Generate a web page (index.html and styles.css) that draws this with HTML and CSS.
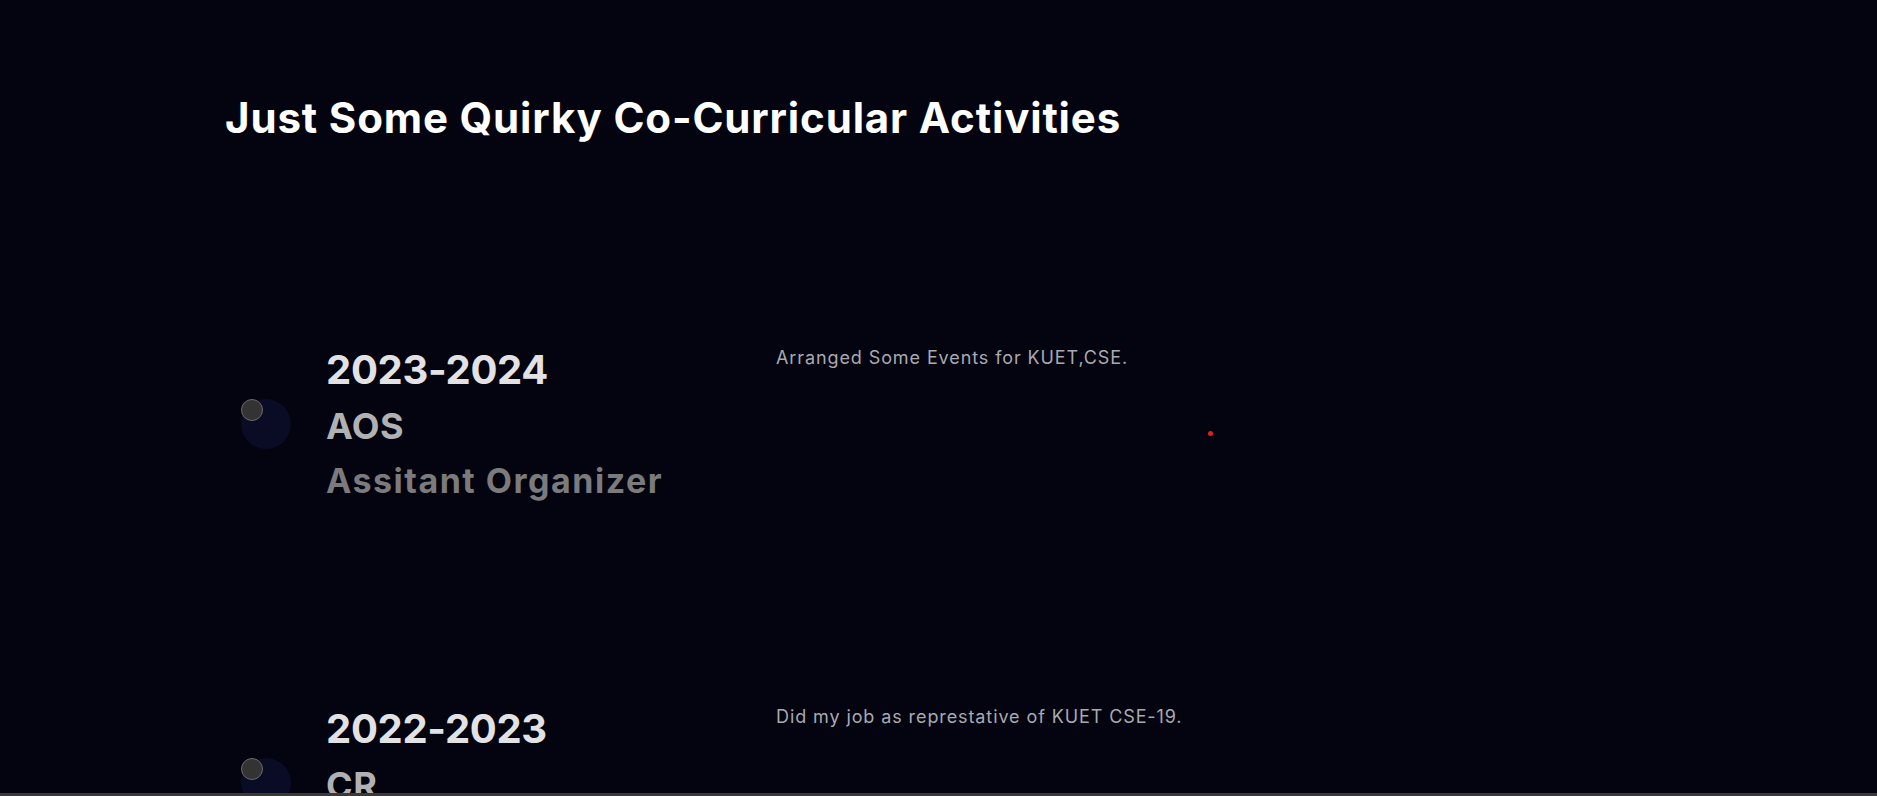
FILE: index.html
```html
<!DOCTYPE html>
<html lang="en">
<head>
<meta charset="utf-8">
<title>Co-Curricular Activities</title>
<link rel="stylesheet" href="styles.css">
</head>
<body>
<main class="page">
  <section class="section">
    <h1 class="title">Just Some Quirky Co-Curricular Activities</h1>
    <div class="timeline">
      <div class="item">
        <div class="left">
          <div class="marker"><span class="dot"></span></div>
          <div class="info">
            <div class="year">2023-2024</div>
            <div class="org">AOS</div>
            <div class="role">Assitant Organizer</div>
          </div>
        </div>
        <p class="desc">Arranged Some Events for KUET,CSE.</p>
      </div>
      <div class="item">
        <div class="left">
          <div class="marker"><span class="dot"></span></div>
          <div class="info">
            <div class="year">2022-2023</div>
            <div class="org">CR</div>
            <div class="role">Class Representative</div>
          </div>
        </div>
        <p class="desc">Did my job as represtative of KUET CSE-19.</p>
      </div>
    </div>
  </section>
  <span class="cursor"></span>
  <div class="bottom-bar"></div>
</main>
</body>
</html>
```

FILE: styles.css
```css
html, body {
  margin: 0;
  padding: 0;
  height: 100%;
  overflow: hidden;
}
body {
  background: #03040f;
  font-family: Inter, "Liberation Sans", sans-serif;
  color: #fff;
}
.page {
  position: relative;
  height: 796px;
  overflow: hidden;
}
.section {
  padding: 93px 0 0 225px;
}
.title {
  margin: 0;
  font-size: 42px;
  font-weight: 700;
  line-height: 50px;
  letter-spacing: 0.85px;
  color: #ffffff;
}
.timeline {
  padding-top: 202px;
  display: flex;
  flex-direction: column;
  gap: 196px;
}
.item {
  display: flex;
  align-items: flex-start;
}
.left {
  display: flex;
  align-items: flex-start;
  width: 551px;
}
.marker {
  position: relative;
  width: 50px;
  height: 50px;
  border-radius: 50%;
  background: #0a0b24;
  margin: 54px 35px 0 16px;
  flex: none;
}
.dot {
  position: absolute;
  left: 0;
  top: 0;
  width: 20px;
  height: 20px;
  border-radius: 50%;
  background: #333333;
  border: 1px solid #6a6a6a;
}
.info {
  display: flex;
  flex-direction: column;
}
.year {
  font-size: 40px;
  font-weight: 700;
  line-height: 50px;
  color: #e2e2e4;
  letter-spacing: -0.3px;
}
.org {
  margin-top: 4px;
  font-size: 36px;
  font-weight: 700;
  line-height: 54px;
  letter-spacing: 0.5px;
  color: #b1b1b4;
}
.role {
  margin-top: 1px;
  font-size: 34px;
  font-weight: 700;
  line-height: 54px;
  letter-spacing: 1.5px;
  color: #7b7b7e;
}
.desc {
  margin: 1px 0 0;
  font-size: 18px;
  line-height: 24px;
  letter-spacing: 0.9px;
  color: #a9a9b0;
}
.cursor {
  position: absolute;
  left: 1208px;
  top: 431px;
  width: 5px;
  height: 5px;
  border-radius: 50%;
  background: #e02020;
}
.bottom-bar {
  position: absolute;
  left: 0;
  right: 0;
  bottom: 0;
  height: 3px;
  background: #3b3b35;
}
```
